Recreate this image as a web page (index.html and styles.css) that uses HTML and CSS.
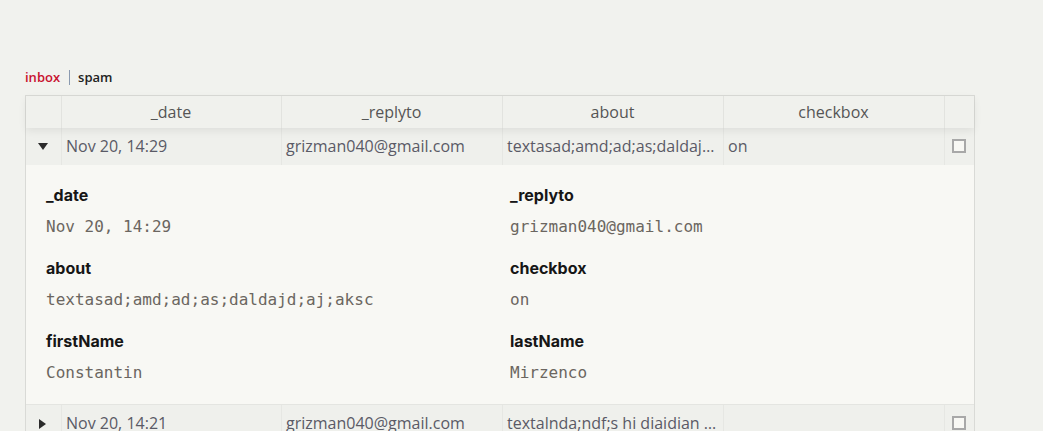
FILE: index.html
```html
<!DOCTYPE html>
<html>
<head>
<meta charset="utf-8">
<link rel="stylesheet" href="styles.css">
</head>
<body>
<div class="page">
  <div class="tabs">
    <span class="tab active">inbox</span>
    <span class="sep"></span>
    <span class="tab">spam</span>
  </div>
  <div class="table">
    <div class="row head">
      <div class="cell toggle"></div>
      <div class="cell">_date</div>
      <div class="cell">_replyto</div>
      <div class="cell">about</div>
      <div class="cell">checkbox</div>
      <div class="cell sel"></div>
    </div>
    <div class="row data">
      <div class="cell toggle"><span class="tri down"></span></div>
      <div class="cell">Nov 20, 14:29</div>
      <div class="cell">grizman040@gmail.com</div>
      <div class="cell">textasad;amd;ad;as;daldajd;aj;aksc</div>
      <div class="cell">on</div>
      <div class="cell sel"><span class="box"></span></div>
    </div>
    <div class="detail">
      <div class="field"><div class="label">_date</div><div class="value">Nov 20, 14:29</div></div>
      <div class="field"><div class="label">_replyto</div><div class="value">grizman040@gmail.com</div></div>
      <div class="field"><div class="label">about</div><div class="value">textasad;amd;ad;as;daldajd;aj;aksc</div></div>
      <div class="field"><div class="label">checkbox</div><div class="value">on</div></div>
      <div class="field"><div class="label">firstName</div><div class="value">Constantin</div></div>
      <div class="field"><div class="label">lastName</div><div class="value">Mirzenco</div></div>
    </div>
    <div class="row data">
      <div class="cell toggle"><span class="tri right"></span></div>
      <div class="cell">Nov 20, 14:21</div>
      <div class="cell">grizman040@gmail.com</div>
      <div class="cell">textalnda;ndf;s hi diaidian ndi aiahdi</div>
      <div class="cell"></div>
      <div class="cell sel"><span class="box"></span></div>
    </div>
  </div>
</div>
</body>
</html>
```

FILE: styles.css
```css
html, body {
  margin: 0;
  padding: 0;
  background: #f1f2ee;
  overflow: hidden;
}
.page {
  padding: 69px 25px 0 25px;
  font-family: "Open Sans", "Liberation Sans", sans-serif;
}
.tabs {
  display: flex;
  align-items: center;
  height: 16px;
  font-size: 13px;
  font-weight: 600;
  margin-bottom: 10px;
}
.tab { color: #222; }
.tab.active { color: #c8102e; }
.sep {
  display: inline-block;
  width: 1px;
  height: 15px;
  background: #8a9ab0;
  margin: 0 8px 0 9px;
}
.table {
  width: 950px;
  box-sizing: border-box;
  border: 1px solid #d9dad6;
  border-bottom: none;
}
.row {
  display: grid;
  grid-template-columns: 36px 220px 221px 221px 221px 29px;
}
.head {
  height: 32px;
  background: #f0f1ed;
  position: relative;
  z-index: 1;
  box-shadow: 0 3px 8px rgba(0, 0, 0, 0.07);
  color: #555;
  font-size: 16px;
}
.head .cell {
  justify-content: center;
  border-right: 1px solid #e2e3df;
}
.cell {
  display: flex;
  align-items: center;
  min-width: 0;
  overflow: hidden;
  white-space: nowrap;
  box-sizing: border-box;
  padding: 0 5px 0 4px;
}
.cell.sel { border-right: none !important; padding: 0; justify-content: center; }
.data {
  height: 37px;
  background: #eff0ec;
  color: #5a5a66;
  font-size: 16px;
}
.data .cell {
  border-right: 1px solid #e6e7e3;
  text-overflow: ellipsis;
  display: block;
  line-height: 36px;
}
.data .cell.toggle, .data .cell.sel {
  display: flex;
  align-items: center;
  justify-content: center;
}
.data .cell.toggle { padding: 0; }
.tri {
  width: 0;
  height: 0;
  display: block;
}
.tri.down {
  border-left: 5px solid transparent;
  border-right: 5px solid transparent;
  border-top: 7px solid #2b2b2b;
  margin-left: -2px;
}
.tri.right {
  border-top: 5px solid transparent;
  border-bottom: 5px solid transparent;
  border-left: 7px solid #2b2b2b;
  margin-left: -2px;
}
.box {
  display: block;
  width: 14px;
  height: 14px;
  box-sizing: border-box;
  border: 2px solid #a8a8a8;
  background: #f8f8f4;
  margin-bottom: 2px;
  margin-right: 2px;
}
.detail {
  background: #f8f8f4;
  border-bottom: 1px solid #e4e5e1;
  padding: 19px 20px 20px 20px;
  display: grid;
  grid-template-columns: 464px 464px;
  row-gap: 19px;
}
.field {
  display: flex;
  flex-direction: column;
  gap: 10px;
}
.label {
  font-family: "Inter", "Lato", sans-serif;
  font-weight: 700;
  font-size: 16px;
  line-height: 22px;
  color: #161616;
}
.value {
  font-family: "DejaVu Sans Mono", "Liberation Mono", monospace;
  font-size: 16px;
  line-height: 22px;
  color: #6b6660;
}
```
